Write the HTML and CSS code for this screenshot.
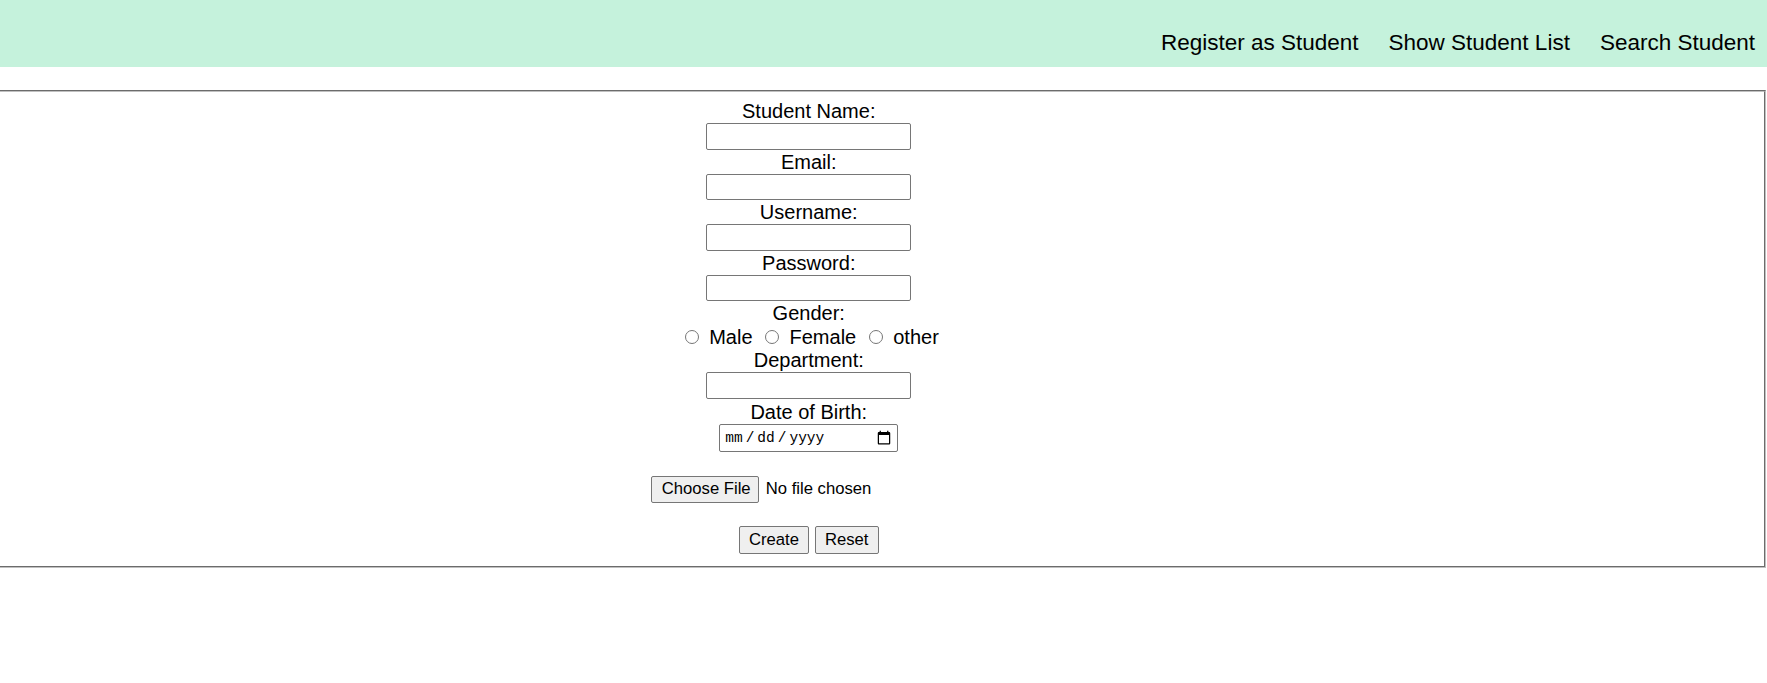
FILE: index.html
```html
<!DOCTYPE html>
<html lang="en">
<head>
<meta charset="utf-8">
<title>Register as Student</title>
<link rel="stylesheet" href="styles.css">
</head>
<body>
<header class="topbar">
  <nav class="nav">
    <a href="#">Register as Student</a>
    <a href="#">Show Student List</a>
    <a href="#">Search Student</a>
  </nav>
</header>
<form class="reg">
  <fieldset class="box">
    <div class="stack">
      <label class="lbl" for="name">Student Name:</label>
      <input class="field" id="name" type="text">
      <label class="lbl" for="email">Email:</label>
      <input class="field" id="email" type="text">
      <label class="lbl" for="user">Username:</label>
      <input class="field" id="user" type="text">
      <label class="lbl" for="pass">Password:</label>
      <input class="field" id="pass" type="password">
      <div class="lbl">Gender:</div>
      <div class="radios">
        <input class="radio" type="radio" name="g" id="m"><label class="opt" for="m">Male</label>
        <input class="radio" type="radio" name="g" id="f"><label class="opt" for="f">Female</label>
        <input class="radio" type="radio" name="g" id="o"><label class="opt last" for="o">other</label>
      </div>
      <label class="lbl" for="dept">Department:</label>
      <input class="field" id="dept" type="text">
      <label class="lbl lbl-date" for="dob">Date of Birth:</label>
      <input class="date" id="dob" type="date">
      <input class="file" type="file">
      <div class="actions">
        <button class="btn" type="submit">Create</button>
        <button class="btn" type="reset">Reset</button>
      </div>
    </div>
  </fieldset>
</form>
</body>
</html>
```
FILE: styles.css
```css
html, body {
  margin: 0;
  padding: 0;
  background: #fff;
}
body {
  font-family: "Liberation Sans", Arial, sans-serif;
  color: #000;
}
.topbar {
  background: #c5f2dc;
  height: 67px;
  display: flex;
  justify-content: flex-end;
  align-items: flex-end;
}
.nav {
  display: flex;
  gap: 30px;
  padding: 0 12px 11px 0;
  font-size: 22.5px;
  line-height: 26px;
}
.nav a {
  color: #000;
  text-decoration: none;
}
.reg {
  margin: 23px 0 0 0;
}
.box {
  margin: 0 1px 0 -148.5px;
  border: 2px groove #c0c0c0;
  padding: 8.3px 15px 12px;
  min-width: 0;
}
.stack {
  display: flex;
  flex-direction: column;
  align-items: center;
}
.lbl {
  font-size: 20px;
  line-height: 23px;
  height: 23px;
  display: block;
}
.lbl-date {
  margin-top: 1px;
}
.field {
  display: block;
  box-sizing: border-box;
  width: 205px;
  height: 26.5px;
  margin: 0 0 1px 0;
  padding: 1px 2px;
  border: 1px solid #767676;
  border-radius: 2px;
  font-family: "Liberation Sans", Arial, sans-serif;
  font-size: 16.67px;
  background: #fff;
}
.radios {
  display: flex;
  align-items: center;
  height: 24px;
  font-size: 20px;
  line-height: 24px;
}
.radio {
  width: 14px;
  height: 14px;
  margin: 0 10.5px 0 6px;
}
.opt {
  margin-right: 6.5px;
}
.opt.last {
  margin-right: 0;
}
.date {
  display: block;
  box-sizing: border-box;
  width: 179px;
  height: 28.3px;
  margin: 0;
  padding: 1px 5px 1px 4px;
  border: 1px solid #767676;
  border-radius: 2px;
  font-family: "Liberation Mono", monospace;
  font-size: 14.5px;
  background: #fff;
  color: #000;
}
.date::-webkit-datetime-edit-text {
  padding: 0 2px;
}
.date::-webkit-calendar-picker-indicator {
  width: 16px;
  height: 16px;
  padding: 0;
  margin: 0;
}
.file {
  display: block;
  box-sizing: border-box;
  width: 316px;
  height: 26.3px;
  margin: 24.2px 0 0 0;
  padding: 0;
  font-family: "Liberation Sans", Arial, sans-serif;
  font-size: 16.67px;
  line-height: 26.3px;
  color: #000;
}
.file::file-selector-button {
  box-sizing: border-box;
  height: 26.3px;
  width: 108px;
  margin: 0 7px 0 0;
  padding: 0 10px;
  border: 1px solid #767676;
  border-radius: 2px;
  background: #efefef;
  color: #000;
  font-family: "Liberation Sans", Arial, sans-serif;
  font-size: 16.67px;
}
.actions {
  display: flex;
  gap: 6px;
  margin-top: 23.7px;
}
.btn {
  box-sizing: border-box;
  height: 27.3px;
  padding: 0 9px;
  border: 1px solid #767676;
  border-radius: 2px;
  background: #efefef;
  color: #000;
  font-family: "Liberation Sans", Arial, sans-serif;
  font-size: 16.67px;
}
```
